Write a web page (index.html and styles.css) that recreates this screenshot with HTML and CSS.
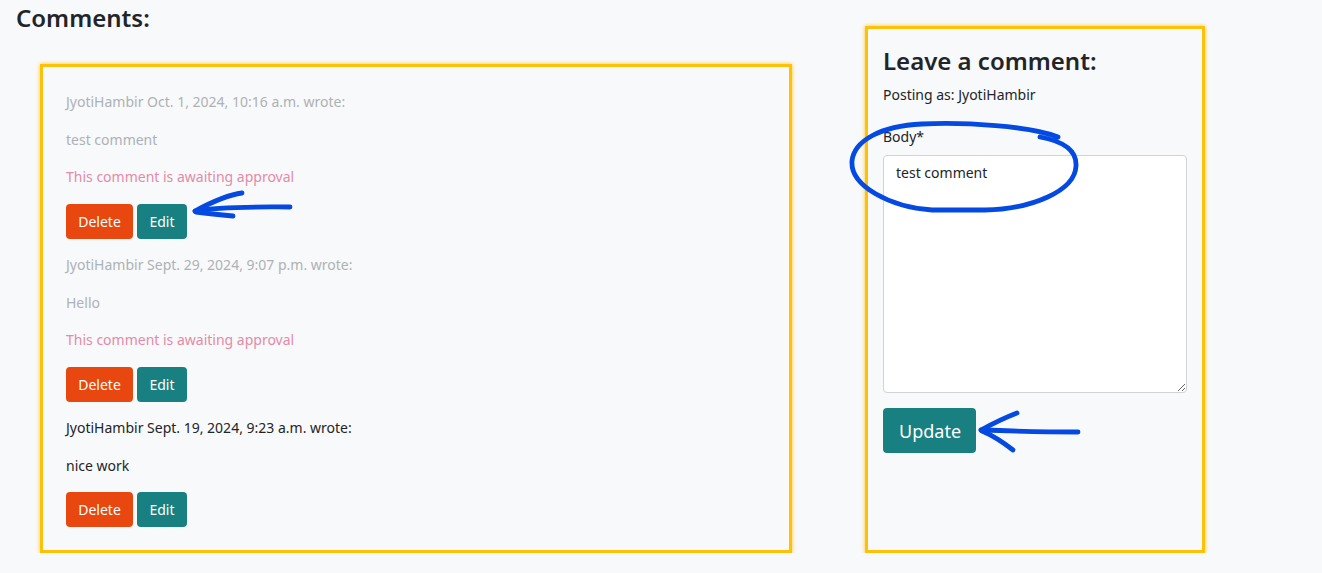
FILE: index.html
```html
<!DOCTYPE html>
<html lang="en">
<head>
<meta charset="utf-8">
<title>Comments</title>
<link rel="stylesheet" href="styles.css">
</head>
<body>
<div class="page">
  <section class="comments-col">
    <h3 class="section-title">Comments:</h3>
    <div class="card comments-card">
      <div class="comment faded">
        <p class="meta">JyotiHambir Oct. 1, 2024, 10:16 a.m. wrote:</p>
        <p class="text">test comment</p>
        <p class="pending">This comment is awaiting approval</p>
        <div class="actions"><button class="btn btn-delete">Delete</button><button class="btn btn-edit">Edit</button></div>
      </div>
      <div class="comment faded">
        <p class="meta">JyotiHambir Sept. 29, 2024, 9:07 p.m. wrote:</p>
        <p class="text">Hello</p>
        <p class="pending">This comment is awaiting approval</p>
        <div class="actions"><button class="btn btn-delete">Delete</button><button class="btn btn-edit">Edit</button></div>
      </div>
      <div class="comment">
        <p class="meta">JyotiHambir Sept. 19, 2024, 9:23 a.m. wrote:</p>
        <p class="text">nice work</p>
        <div class="actions last"><button class="btn btn-delete">Delete</button><button class="btn btn-edit">Edit</button></div>
      </div>
    </div>
  </section>
  <aside class="card form-card">
    <h3 class="form-title">Leave a comment:</h3>
    <p class="posting">Posting as: JyotiHambir</p>
    <label class="field-label" for="body">Body*</label>
    <textarea id="body" class="field">test comment</textarea>
    <button class="btn btn-update">Update</button>
  </aside>
</div>
<svg class="annotations" width="1322" height="573" viewBox="0 0 1322 573" xmlns="http://www.w3.org/2000/svg">
  <g fill="none" stroke="#0349e2" stroke-width="4.8" stroke-linecap="round" stroke-linejoin="round">
    <path d="M290 207 C262 207 222 206 195 211"/>
    <path d="M195 211 C210 203 226 195 242 193"/>
    <path d="M196 212 C210 214 221 215 233 216"/>
    <path d="M1058 137 C1030 126 965 122 922 124 C880 126 854 141 852 161 C850 186 890 207 932 210 L985 210 C1032 209 1075 191 1076 166 C1077 149 1062 141 1040 137"/>
    <path d="M1078 432 C1050 432 1010 431 981 430"/>
    <path d="M981 430 C992 424 1004 418 1017 413"/>
    <path d="M982 431 C994 436 1004 443 1013 450"/>
  </g>
</svg>
</body>
</html>
```
FILE: styles.css
```css
html, body {
  margin: 0;
  padding: 0;
  background: #f8f9fa;
  font-family: "Noto Sans", "Open Sans", sans-serif;
  color: #212529;
}

.page {
  display: flex;
  align-items: stretch;
  padding-left: 16px;
}

.comments-col {
  display: flex;
  flex-direction: column;
  width: 776px;
}

.section-title {
  margin: 0;
  font-size: 24px;
  font-weight: 600;
  line-height: 36px;
  color: #212529;
}

.card {
  border: 3px solid #ffc107;
  box-shadow: 0 0 4px rgba(255, 193, 7, 0.9);
  background: #f8f9fa;
  box-sizing: border-box;
}

.comments-card {
  margin: 28px 0 0 24px;
  width: 752px;
  padding: 24px 23px 23px;
}

.comment p {
  margin: 0 0 15.5px;
  font-size: 14px;
  line-height: 22px;
}

.comment.faded .meta,
.comment.faded .text {
  color: #aeb1b5;
}

.comment .pending {
  color: #e38ba7;
}

.actions {
  display: flex;
  gap: 4px;
  margin-bottom: 15.5px;
}

.actions.last {
  margin-bottom: 0;
}

.btn {
  border: none;
  border-radius: 4px;
  color: #ffffff;
  font-family: "Noto Sans", "Open Sans", sans-serif;
  cursor: pointer;
}

.actions .btn {
  height: 35px;
  padding: 0 12px;
  font-size: 14px;
}

.btn-delete {
  background: #e84710;
  width: 67px;
}

.btn-edit {
  background: #188080;
  width: 50px;
}

.form-card {
  margin: 26px 0 0 73px;
  width: 340px;
  padding: 15px;
  display: flex;
  flex-direction: column;
  align-items: flex-start;
}

.form-title {
  margin: 0;
  font-size: 24px;
  font-weight: 600;
  line-height: 34px;
  color: #212529;
}

.posting {
  margin: 6px 0 0;
  font-size: 14px;
  line-height: 22px;
}

.field-label {
  margin-top: 20px;
  font-size: 14px;
  line-height: 22px;
}

.field {
  margin-top: 7px;
  width: 304px;
  height: 238px;
  box-sizing: border-box;
  border: 1px solid #ced4da;
  border-radius: 4px;
  background: #ffffff;
  padding: 6px 12px;
  font-family: "Noto Sans", "Open Sans", sans-serif;
  font-size: 14px;
  line-height: 22px;
  color: #212529;
  resize: vertical;
}

.btn-update {
  margin-top: 15px;
  background: #188080;
  width: 93px;
  height: 45px;
  font-size: 18px;
  padding: 0 16px;
}

.annotations {
  position: absolute;
  left: 0;
  top: 0;
  pointer-events: none;
}
```
